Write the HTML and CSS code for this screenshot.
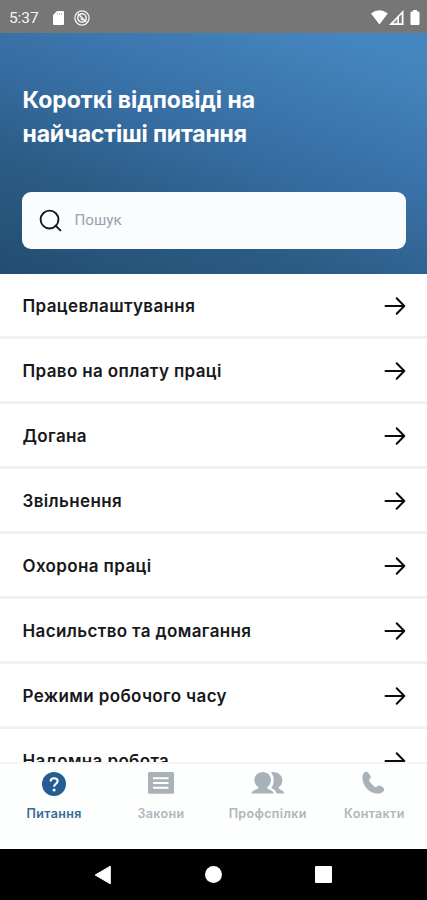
FILE: index.html
```html
<!DOCTYPE html>
<html lang="uk">
<head>
<meta charset="utf-8">
<meta name="viewport" content="width=device-width, initial-scale=1">
<title>Питання</title>
<link rel="stylesheet" href="styles.css">
</head>
<body>
<svg width="0" height="0" class="defs" aria-hidden="true">
  <symbol id="arrow" viewBox="0 0 22 20">
    <path d="M1.5 10H20.3M12.7 2.3L20.3 10L12.7 17.7" fill="none" stroke="#0c0c0e" stroke-width="2" stroke-linecap="round" stroke-linejoin="round"/>
  </symbol>
</svg>
<div class="screen">
  <div class="status">
    <span class="clock">5:37</span>
    <svg class="sd" width="11" height="14" viewBox="0 0 11 14"><path d="M4 0H10Q11 0 11 1V13Q11 14 10 14H1Q0 14 0 13V4Z" fill="#fff"/><path d="M4.3 2V4M6.4 2V4M8.5 2V4" stroke="#bbb" stroke-width=".8"/></svg>
    <svg class="dnd" width="16" height="16" viewBox="0 0 16 16" fill="none" stroke="#f4f4f4"><circle cx="8" cy="8" r="7.1" stroke-width="1.3"/><circle cx="8" cy="8" r="4.2" stroke-width="1.5"/><path d="M4 3.8L12.2 12" stroke-width="1.6"/><path d="M6.5 8.5L9 10.5" stroke-width="1.2"/></svg>
    <svg class="wifi" width="17" height="15" viewBox="0 0 17 15"><path d="M0 3.4Q8.3-3 16.8 3.4L8.4 14.4Z" fill="#fff"/></svg>
    <svg class="cell" width="15" height="15" viewBox="0 0 15 15"><path d="M14.5 0V15H0Z" fill="#fff"/><path d="M12.7 4.2V13.3H10V6.8Z" fill="#777"/><path d="M8.5 8.4V13.3H3.8Z" fill="#999"/></svg>
    <svg class="battery" width="10" height="15" viewBox="0 0 10 15"><path d="M3 0H7V1.5H8.5Q9.5 1.5 9.5 2.5V14Q9.5 15 8.5 15H1.5Q.5 15 .5 14V2.5Q.5 1.5 1.5 1.5H3Z" fill="#fff"/></svg>
  </div>
  <header class="hero">
    <h1>Короткі відповіді на<br><span class="second">найчастіші питання</span></h1>
    <div class="search">
      <svg width="23" height="23" viewBox="0 0 24 24" fill="none" stroke="#16181b" stroke-width="2"><circle cx="11" cy="11" r="9.3"/><path d="M17.3 17.3L22.3 22.3" stroke-linecap="round"/></svg>
      <span>Пошук</span>
    </div>
  </header>
  <main class="list">
    <div class="row"><span>Працевлаштування</span><svg><use href="#arrow"/></svg></div>
    <div class="row"><span>Право на оплату праці</span><svg><use href="#arrow"/></svg></div>
    <div class="row"><span>Догана</span><svg><use href="#arrow"/></svg></div>
    <div class="row"><span>Звільнення</span><svg><use href="#arrow"/></svg></div>
    <div class="row"><span>Охорона праці</span><svg><use href="#arrow"/></svg></div>
    <div class="row"><span>Насильство та домагання</span><svg><use href="#arrow"/></svg></div>
    <div class="row"><span>Режими робочого часу</span><svg><use href="#arrow"/></svg></div>
    <div class="row"><span>Надомна робота</span><svg><use href="#arrow"/></svg></div>
  </main>
  <nav class="tabs">
    <div class="tab active">
      <svg width="34" height="26" viewBox="0 0 34 26"><circle cx="17" cy="13" r="12" fill="#245e91"/><path d="M13.6 10.6C13.6 8.5 15 7.2 17.1 7.2C19.2 7.2 20.6 8.4 20.6 10.3C20.6 12.8 17.1 12.8 17.1 15.7" fill="none" stroke="#fff" stroke-width="2.1"/><circle cx="17.1" cy="18.9" r="1.5" fill="#fff"/></svg>
      <span>Питання</span>
    </div>
    <div class="tab">
      <svg width="34" height="26" viewBox="0 0 34 26"><rect x="4" y="1" width="26" height="21.7" rx="1.5" fill="#a9b1b9"/><path d="M9 7.2H24.5M9 12H24.5M9 16.8H24.5" stroke="#fff" stroke-width="2.1"/></svg>
      <span>Закони</span>
    </div>
    <div class="tab">
      <svg width="34" height="26" viewBox="0 0 34 26" fill="#a9b1b9"><path d="M11.8 1C16.5 1 20 4.6 20 9C20 12.2 18.2 14.8 16.2 16.2C16 18 18.2 18.2 20 19.2C21.7 20.1 22.5 21 22.7 22.5H.5C.7 21 1.5 20.1 3.3 19.2C5.3 18.2 7.7 18 7.4 16.2C5.2 14.8 3.4 12.2 3.4 9C3.4 4.6 7.1 1 11.8 1Z"/><path d="M20.7 1.2C26.7 .4 31.3 4.2 31.3 9.5C31.3 12.6 29.7 15.2 27.5 16.3C27.5 17.8 28.7 18.3 30.4 19.1C32.3 20 33 21 33.2 22.5H25.4C25 19 22.4 18.3 20.3 17C21.9 15 22.7 12.2 22.7 9.2C22.7 6 21.9 3.2 19.9 1.4Z"/></svg>
      <span>Профспілки</span>
    </div>
    <div class="tab">
      <svg width="34" height="26" viewBox="0 0 34 26" fill="#a9b1b9"><path d="M7.3 1.4Q5.2 2.8 5.4 7C5.8 15.5 12.3 22.2 20.3 22.6Q24.9 22.7 26.5 20.3Q28.1 18 25.8 16.3L23.9 15Q21.9 13.7 20.3 15.3Q19 16.8 17.6 15.7Q14.5 13.4 12.4 10.2Q11.6 9 13 7.8Q14.5 6.5 13.3 4.4L11.5 1.9Q9.9-.1 7.3 1.4Z"/></svg>
      <span>Контакти</span>
    </div>
  </nav>
  <footer class="sysnav">
    <svg width="18" height="20" viewBox="0 0 18 20"><path d="M16.3 1.2V18.8L1.2 10Z" fill="#fff" stroke="#fff" stroke-linejoin="round"/></svg>
    <i class="home"></i>
    <i class="recent"></i>
  </footer>
</div>
</body>
</html>
```
FILE: styles.css
```css
* { box-sizing: border-box; }
body { margin: 0; background: #fff; font-family: Inter, "Liberation Sans", sans-serif; }
.defs { display: block; height: 0; }
.screen { width: 427px; height: 900px; display: flex; flex-direction: column; overflow: hidden; }
.status { height: 33px; flex: none; background: #767676; display: flex; align-items: center; padding: 2px 7px 0 9px; }
.clock { width: 44px; font: 15.5px Roboto, sans-serif; letter-spacing: -.1px; color: #f5f5f5; }
.dnd { margin-left: 10px; }
.wifi { margin-left: auto; }
.cell { margin-left: 1px; }
.battery { margin-left: 6px; }
.hero { height: 241px; flex: none; padding: 50px 21px 0 22px; background: linear-gradient(200deg, #4586bf 8%, #376ea3 45%, #2b5c85 70%, #234d71 100%); }
h1 { margin: 0 0 0 .5px; font-size: 23px; line-height: 34px; font-weight: 700; color: #fff; white-space: nowrap; }
.second { letter-spacing: -.17px; }
.search { margin-top: 41px; height: 56.5px; border-radius: 9px; background: #fafcfd; display: flex; align-items: center; padding-left: 17px; gap: 12.5px; font: 15.2px Roboto, sans-serif; color: #9aa0b0; }
.list { height: 488px; flex: none; overflow: hidden; background: #fff; }
.row { height: 65px; display: flex; align-items: center; justify-content: space-between; padding: 2px 21px 0 22.5px; border-bottom: 3px solid #eff1f2; font-size: 17px; letter-spacing: .37px; font-weight: 600; color: #17181b; white-space: nowrap; }
.row svg { width: 22px; height: 20px; }
.tabs { height: 87px; flex: none; border-top: 2px solid #f4f5f6; background: #fdfefe; display: grid; grid-template-columns: repeat(4, 106.75px); padding: 7px 0 0 .8px; }
.tab { display: flex; flex-direction: column; align-items: center; gap: 8px; font-size: 12.5px; letter-spacing: .35px; line-height: 18px; font-weight: 600; color: #b0b5ba; }
.tab.active { color: #366a9b; }
.sysnav { height: 51px; flex: none; background: #000; display: flex; align-items: center; justify-content: center; gap: 93px; padding-right: 1px; }
.home { width: 17px; height: 17px; border-radius: 50%; background: #fff; }
.recent { width: 17px; height: 17px; border-radius: 1px; background: #fff; }
```
